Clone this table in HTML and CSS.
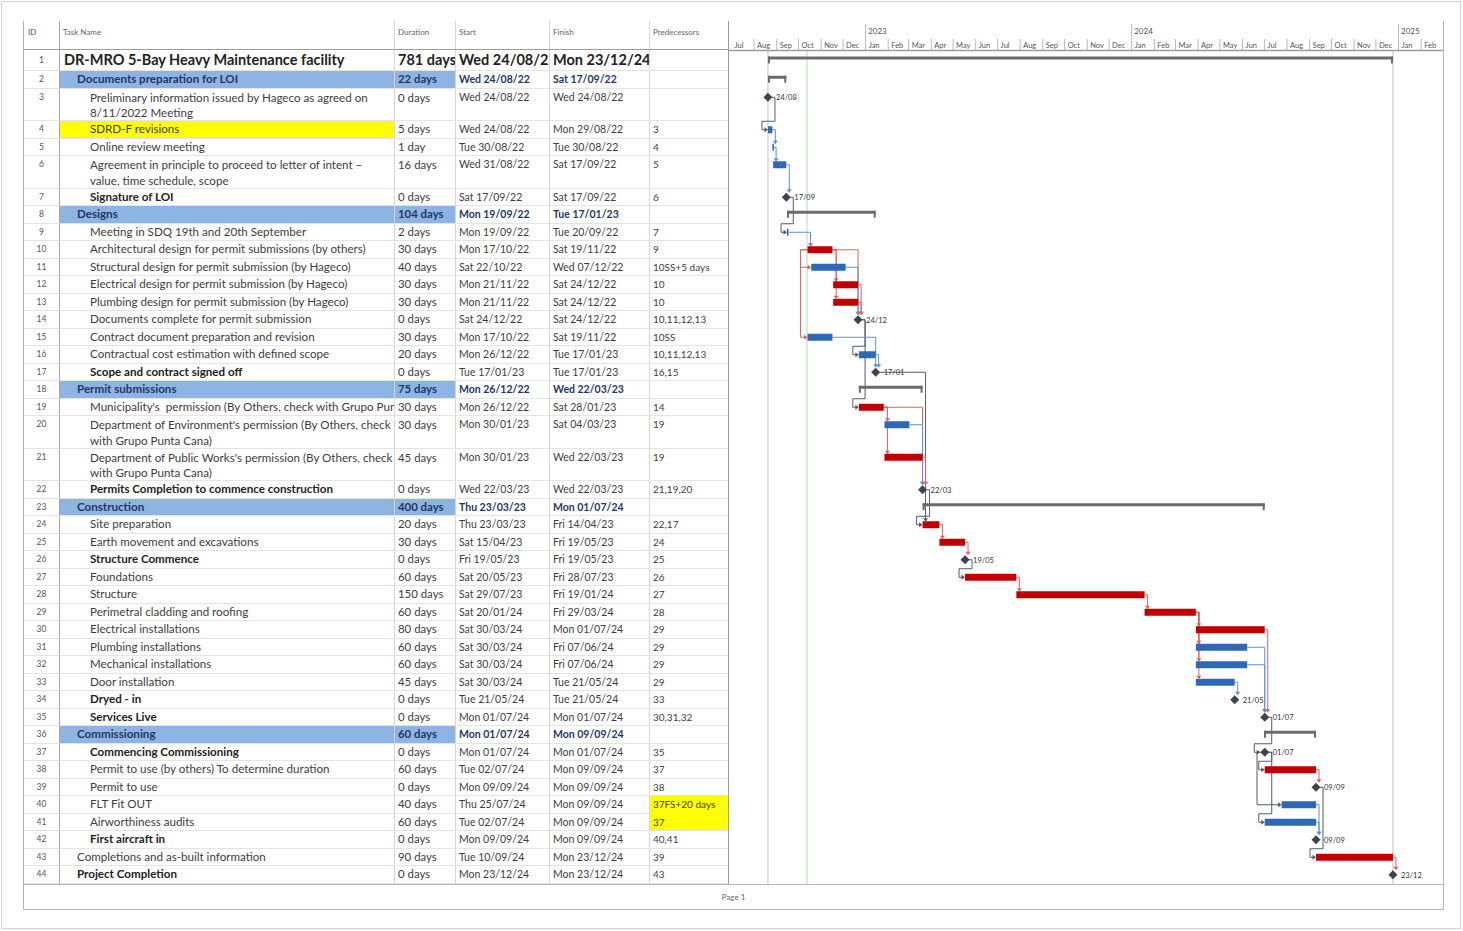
FILE: index.html
```html
<!DOCTYPE html>
<html lang="en">
<head>
<meta charset="utf-8">
<title>DR-MRO 5-Bay Heavy Maintenance facility – Gantt</title>
<link rel="stylesheet" href="styles.css">
</head>
<body>
<div class="sheet">
  <div class="page">
    <div class="main">
      <div class="table">
        <div class="row head"><div class="c id">ID</div><div class="c">Task Name</div><div class="c">Duration</div><div class="c">Start</div><div class="c">Finish</div><div class="c">Predecessors</div></div>
        <div class="row r-top"><div class="c id">1</div><div class="c name l0">DR-MRO 5-Bay Heavy Maintenance facility</div><div class="c dur">781 days</div><div class="c">Wed 24/08/22</div><div class="c">Mon 23/12/24</div><div class="c"></div></div>
        <div class="row sum"><div class="c id">2</div><div class="c name l1">Documents preparation for LOI</div><div class="c dur">22 days</div><div class="c">Wed 24/08/22</div><div class="c">Sat 17/09/22</div><div class="c"></div></div>
        <div class="row dbl"><div class="c id">3</div><div class="c name l2">Preliminary information issued by Hageco as agreed on<br>8/11/2022 Meeting</div><div class="c dur">0 days</div><div class="c">Wed 24/08/22</div><div class="c">Wed 24/08/22</div><div class="c"></div></div>
        <div class="row"><div class="c id">4</div><div class="c name l2 yellow">SDRD-F revisions</div><div class="c dur">5 days</div><div class="c">Wed 24/08/22</div><div class="c">Mon 29/08/22</div><div class="c">3</div></div>
        <div class="row"><div class="c id">5</div><div class="c name l2">Online review meeting</div><div class="c dur">1 day</div><div class="c">Tue 30/08/22</div><div class="c">Tue 30/08/22</div><div class="c">4</div></div>
        <div class="row dbl"><div class="c id">6</div><div class="c name l2">Agreement in principle to proceed to letter of intent –<br>value, time schedule, scope</div><div class="c dur">16 days</div><div class="c">Wed 31/08/22</div><div class="c">Sat 17/09/22</div><div class="c">5</div></div>
        <div class="row"><div class="c id">7</div><div class="c name l2 b">Signature of LOI</div><div class="c dur">0 days</div><div class="c">Sat 17/09/22</div><div class="c">Sat 17/09/22</div><div class="c">6</div></div>
        <div class="row sum"><div class="c id">8</div><div class="c name l1">Designs</div><div class="c dur">104 days</div><div class="c">Mon 19/09/22</div><div class="c">Tue 17/01/23</div><div class="c"></div></div>
        <div class="row"><div class="c id">9</div><div class="c name l2">Meeting in SDQ 19th and 20th September</div><div class="c dur">2 days</div><div class="c">Mon 19/09/22</div><div class="c">Tue 20/09/22</div><div class="c">7</div></div>
        <div class="row"><div class="c id">10</div><div class="c name l2">Architectural design for permit submissions (by others)</div><div class="c dur">30 days</div><div class="c">Mon 17/10/22</div><div class="c">Sat 19/11/22</div><div class="c">9</div></div>
        <div class="row"><div class="c id">11</div><div class="c name l2">Structural design for permit submission (by Hageco)</div><div class="c dur">40 days</div><div class="c">Sat 22/10/22</div><div class="c">Wed 07/12/22</div><div class="c">10SS+5 days</div></div>
        <div class="row"><div class="c id">12</div><div class="c name l2">Electrical design for permit submission (by Hageco)</div><div class="c dur">30 days</div><div class="c">Mon 21/11/22</div><div class="c">Sat 24/12/22</div><div class="c">10</div></div>
        <div class="row"><div class="c id">13</div><div class="c name l2">Plumbing design for permit submission (by Hageco)</div><div class="c dur">30 days</div><div class="c">Mon 21/11/22</div><div class="c">Sat 24/12/22</div><div class="c">10</div></div>
        <div class="row"><div class="c id">14</div><div class="c name l2">Documents complete for permit submission</div><div class="c dur">0 days</div><div class="c">Sat 24/12/22</div><div class="c">Sat 24/12/22</div><div class="c">10,11,12,13</div></div>
        <div class="row"><div class="c id">15</div><div class="c name l2">Contract document preparation and revision</div><div class="c dur">30 days</div><div class="c">Mon 17/10/22</div><div class="c">Sat 19/11/22</div><div class="c">10SS</div></div>
        <div class="row"><div class="c id">16</div><div class="c name l2">Contractual cost estimation with defined scope</div><div class="c dur">20 days</div><div class="c">Mon 26/12/22</div><div class="c">Tue 17/01/23</div><div class="c">10,11,12,13</div></div>
        <div class="row"><div class="c id">17</div><div class="c name l2 b">Scope and contract signed off</div><div class="c dur">0 days</div><div class="c">Tue 17/01/23</div><div class="c">Tue 17/01/23</div><div class="c">16,15</div></div>
        <div class="row sum"><div class="c id">18</div><div class="c name l1">Permit submissions</div><div class="c dur">75 days</div><div class="c">Mon 26/12/22</div><div class="c">Wed 22/03/23</div><div class="c"></div></div>
        <div class="row"><div class="c id">19</div><div class="c name l2">Municipality's&nbsp; permission (By Others, check with Grupo Punta Cana)</div><div class="c dur">30 days</div><div class="c">Mon 26/12/22</div><div class="c">Sat 28/01/23</div><div class="c">14</div></div>
        <div class="row dbl"><div class="c id">20</div><div class="c name l2">Department of Environment's permission (By Others, check<br>with Grupo Punta Cana)</div><div class="c dur">30 days</div><div class="c">Mon 30/01/23</div><div class="c">Sat 04/03/23</div><div class="c">19</div></div>
        <div class="row dbl"><div class="c id">21</div><div class="c name l2">Department of Public Works's permission (By Others, check<br>with Grupo Punta Cana)</div><div class="c dur">45 days</div><div class="c">Mon 30/01/23</div><div class="c">Wed 22/03/23</div><div class="c">19</div></div>
        <div class="row"><div class="c id">22</div><div class="c name l2 b">Permits Completion to commence construction</div><div class="c dur">0 days</div><div class="c">Wed 22/03/23</div><div class="c">Wed 22/03/23</div><div class="c">21,19,20</div></div>
        <div class="row sum"><div class="c id">23</div><div class="c name l1">Construction</div><div class="c dur">400 days</div><div class="c">Thu 23/03/23</div><div class="c">Mon 01/07/24</div><div class="c"></div></div>
        <div class="row"><div class="c id">24</div><div class="c name l2">Site preparation</div><div class="c dur">20 days</div><div class="c">Thu 23/03/23</div><div class="c">Fri 14/04/23</div><div class="c">22,17</div></div>
        <div class="row"><div class="c id">25</div><div class="c name l2">Earth movement and excavations</div><div class="c dur">30 days</div><div class="c">Sat 15/04/23</div><div class="c">Fri 19/05/23</div><div class="c">24</div></div>
        <div class="row"><div class="c id">26</div><div class="c name l2 b">Structure Commence</div><div class="c dur">0 days</div><div class="c">Fri 19/05/23</div><div class="c">Fri 19/05/23</div><div class="c">25</div></div>
        <div class="row"><div class="c id">27</div><div class="c name l2">Foundations</div><div class="c dur">60 days</div><div class="c">Sat 20/05/23</div><div class="c">Fri 28/07/23</div><div class="c">26</div></div>
        <div class="row"><div class="c id">28</div><div class="c name l2">Structure</div><div class="c dur">150 days</div><div class="c">Sat 29/07/23</div><div class="c">Fri 19/01/24</div><div class="c">27</div></div>
        <div class="row"><div class="c id">29</div><div class="c name l2">Perimetral cladding and roofing</div><div class="c dur">60 days</div><div class="c">Sat 20/01/24</div><div class="c">Fri 29/03/24</div><div class="c">28</div></div>
        <div class="row"><div class="c id">30</div><div class="c name l2">Electrical installations</div><div class="c dur">80 days</div><div class="c">Sat 30/03/24</div><div class="c">Mon 01/07/24</div><div class="c">29</div></div>
        <div class="row"><div class="c id">31</div><div class="c name l2">Plumbing installations</div><div class="c dur">60 days</div><div class="c">Sat 30/03/24</div><div class="c">Fri 07/06/24</div><div class="c">29</div></div>
        <div class="row"><div class="c id">32</div><div class="c name l2">Mechanical installations</div><div class="c dur">60 days</div><div class="c">Sat 30/03/24</div><div class="c">Fri 07/06/24</div><div class="c">29</div></div>
        <div class="row"><div class="c id">33</div><div class="c name l2">Door installation</div><div class="c dur">45 days</div><div class="c">Sat 30/03/24</div><div class="c">Tue 21/05/24</div><div class="c">29</div></div>
        <div class="row"><div class="c id">34</div><div class="c name l2 b">Dryed - in</div><div class="c dur">0 days</div><div class="c">Tue 21/05/24</div><div class="c">Tue 21/05/24</div><div class="c">33</div></div>
        <div class="row"><div class="c id">35</div><div class="c name l2 b">Services Live</div><div class="c dur">0 days</div><div class="c">Mon 01/07/24</div><div class="c">Mon 01/07/24</div><div class="c">30,31,32</div></div>
        <div class="row sum"><div class="c id">36</div><div class="c name l1">Commissioning</div><div class="c dur">60 days</div><div class="c">Mon 01/07/24</div><div class="c">Mon 09/09/24</div><div class="c"></div></div>
        <div class="row"><div class="c id">37</div><div class="c name l2 b">Commencing Commissioning</div><div class="c dur">0 days</div><div class="c">Mon 01/07/24</div><div class="c">Mon 01/07/24</div><div class="c">35</div></div>
        <div class="row"><div class="c id">38</div><div class="c name l2">Permit to use (by others) To determine duration</div><div class="c dur">60 days</div><div class="c">Tue 02/07/24</div><div class="c">Mon 09/09/24</div><div class="c">37</div></div>
        <div class="row"><div class="c id">39</div><div class="c name l2">Permit to use</div><div class="c dur">0 days</div><div class="c">Mon 09/09/24</div><div class="c">Mon 09/09/24</div><div class="c">38</div></div>
        <div class="row"><div class="c id">40</div><div class="c name l2">FLT Fit OUT</div><div class="c dur">40 days</div><div class="c">Thu 25/07/24</div><div class="c">Mon 09/09/24</div><div class="c yellow">37FS+20 days</div></div>
        <div class="row"><div class="c id">41</div><div class="c name l2">Airworthiness audits</div><div class="c dur">60 days</div><div class="c">Tue 02/07/24</div><div class="c">Mon 09/09/24</div><div class="c yellow">37</div></div>
        <div class="row"><div class="c id">42</div><div class="c name l2 b">First aircraft in</div><div class="c dur">0 days</div><div class="c">Mon 09/09/24</div><div class="c">Mon 09/09/24</div><div class="c">40,41</div></div>
        <div class="row"><div class="c id">43</div><div class="c name l1">Completions and as-built information</div><div class="c dur">90 days</div><div class="c">Tue 10/09/24</div><div class="c">Mon 23/12/24</div><div class="c">39</div></div>
        <div class="row"><div class="c id">44</div><div class="c name l1 b">Project Completion</div><div class="c dur">0 days</div><div class="c">Mon 23/12/24</div><div class="c">Mon 23/12/24</div><div class="c">43</div></div>
      </div>
      <div class="chart">
        <svg id="gantt" class="gantt" width="714" height="863" viewBox="0 0 714 863" xmlns="http://www.w3.org/2000/svg"></svg>
      </div>
    </div>
    <div class="footer">Page 1</div>
  </div>
</div>
<script src="chart.js"></script>
</body>
</html>
```

FILE: styles.css
```css
* { box-sizing: border-box; }
html, body { margin: 0; padding: 0; background: #fff; }
body {
  font-family: Lato, "Open Sans", "Liberation Sans", sans-serif;
  color: #3d3d3d;
}
.sheet {
  margin: 1px;
  width: 1460px;
  height: 928px;
  border: 1px solid #d2d2d2;
  padding: 19px 0 0 21px;
}
.page {
  width: 1421px;
  border: 1px solid #b4b4b4;
  border-top: none;
}
.main { display: flex; height: 863px; }
.table { width: 704px; flex: none; }
.chart { width: 715px; flex: none; border-left: 1px solid #9c9c9c; }
.gantt { display: block; }

.row {
  display: grid;
  grid-template-columns: 36px 335px 61px 94px 100px 78px;
  height: 17.5px;
  font-size: 10.5px;
}
.c {
  border-right: 1px solid #d6d6d6;
  border-bottom: 1px solid #e4e4e4;
  padding: 0 3px;
  line-height: 16.5px;
  white-space: nowrap;
  overflow: hidden;
}
.c:last-child { border-right: none; font-size: 10px; }
.name { font-size: 11.6px; }
.dur { font-size: 11.4px; }
.id { text-align: center; border-right-color: #a6a6a6; font-size: 8.5px; color: #555; }

.head { height: 29px; border-bottom: 1px solid #9d9d9d; color: #666; }
.head .c { border-bottom: none; padding-top: 6px; line-height: 10px; font-size: 8px; }
.head .id { text-align: left; padding-left: 4px; }

.r-top { height: 21px; font-weight: 700; color: #222; }
.r-top .c { line-height: 20px; font-size: 14.5px; }
.r-top .id { font-size: 8.5px; font-weight: 400; color: #555; }

.dbl { height: 32.5px; }
.dbl .c { line-height: 15.5px; padding-top: 1px; }

.l0 { padding-left: 4px; }
.l1 { padding-left: 17px; }
.l2 { padding-left: 30px; }

.sum .c { font-weight: 700; color: #1f3763; }
.sum .name, .sum .dur { background: #8eb4e3; }
.sum .id { font-weight: 400; color: #555; }
.b { font-weight: 700; color: #222; }
.yellow { background: #ffff00; }

.footer {
  height: 25px;
  border-top: 1px solid #b4b4b4;
  text-align: center;
  font-size: 8px;
  color: #666;
  line-height: 24px;
}

/* gantt drawing */
.tick { stroke: #b9b9b9; stroke-width: 1; }
.mlab { font: 7.5px Lato, sans-serif; fill: #555; }
.ylab { font: 8px Lato, sans-serif; fill: #555; }
.hline { stroke: #9d9d9d; stroke-width: 1.5; }
.vproj { stroke: #c2c2c2; stroke-width: 1; }
.vnow { stroke: #b5dbb5; stroke-width: 1; }
.mslab { font: 7.5px Lato, sans-serif; fill: #333; }
.link { fill: none; stroke-width: 1; }
```

FILE: chart.js
```js
(function () {
  var NS = 'http://www.w3.org/2000/svg';
  var svg = document.getElementById('gantt');
  var LEFT = 729, TOP = 21, W = 714, H = 884 - TOP;
  var BASE = Date.UTC(2022, 6, 1);
  function dnum(s) { var p = s.split('/'); return (Date.UTC(2000 + (+p[2]), (+p[1]) - 1, +p[0]) - BASE) / 864e5; }
  var K = 0.7327, X0 = 728.4 - LEFT;
  function xs(s) { return X0 + dnum(s) * K; }
  function xe(s) { return X0 + (dnum(s) + 1) * K; }
  var HX0 = 731.5 - LEFT, HK = 0.729;
  function hx(d) { return HX0 + d * HK; }
  var RED = '#c00000', BLUE = '#2f69b5', LR = '#e06060', LB = '#5d8fd8', LG = '#555b63';

  function add(tag, attrs, text) {
    var e = document.createElementNS(NS, tag);
    for (var k in attrs) e.setAttribute(k, attrs[k]);
    if (text != null) e.textContent = text;
    svg.appendChild(e);
    return e;
  }

  /* row geometry */
  var dbl = { 3: 1, 6: 1, 20: 1, 21: 1 };
  var mid = {}, y = 50 - TOP;
  for (var i = 1; i <= 44; i++) {
    var h = i === 1 ? 21 : (dbl[i] ? 32.5 : 17.5);
    mid[i] = dbl[i] ? y + 8.75 : y + h / 2;
    y += h;
  }

  /* timescale */
  var months = ['Jul', 'Aug', 'Sep', 'Oct', 'Nov', 'Dec', 'Jan', 'Feb', 'Mar', 'Apr', 'May', 'Jun'];
  for (var m = 0; m < 32; m++) {
    var yr = 2022 + Math.floor((m + 6) / 12), mo = (m + 6) % 12;
    var d0 = (Date.UTC(yr, mo, 1) - BASE) / 864e5;
    var x = hx(d0);
    if (m > 0) add('line', { x1: x, x2: x, y1: mo === 0 ? 3 : 18, y2: 29, 'class': 'tick' });
    add('text', { x: x + 3, y: 26.5, 'class': 'mlab' }, months[m % 12]);
    if (mo === 0) add('text', { x: x + 2.5, y: 12.5, 'class': 'ylab' }, String(yr));
  }
  add('line', { x1: 0, x2: W, y1: 29.5, y2: 29.5, 'class': 'hline' });

  /* vertical guide lines */
  var ps = xs('24/08/22'), pe = xe('23/12/24'), now = 807 - LEFT;
  add('line', { x1: ps, x2: ps, y1: 30, y2: H, 'class': 'vproj' });
  add('line', { x1: pe, x2: pe, y1: 30, y2: H, 'class': 'vproj' });
  add('line', { x1: now, x2: now, y1: 30, y2: H, 'class': 'vnow' });

  /* tasks */
  var T = {};
  function bar(id, s, f, c) { T[id] = { t: 'bar', x1: xs(s), x2: xe(f), y: mid[id], c: c }; }
  function ms(id, x, label) { T[id] = { t: 'ms', x: x, y: mid[id], label: label }; }
  function sum(id, s, f) { T[id] = { t: 'sum', x1: xs(s), x2: xe(f), y: mid[id] }; }

  sum(1, '24/08/22', '23/12/24');
  sum(2, '24/08/22', '17/09/22');
  ms(3, xs('24/08/22'), '24/08');
  bar(4, '24/08/22', '29/08/22', 'b');
  bar(5, '30/08/22', '30/08/22', 'b');
  bar(6, '31/08/22', '17/09/22', 'b');
  ms(7, xe('17/09/22'), '17/09');
  sum(8, '19/09/22', '17/01/23');
  bar(9, '19/09/22', '20/09/22', 'b');
  bar(10, '17/10/22', '19/11/22', 'r');
  bar(11, '22/10/22', '07/12/22', 'b');
  bar(12, '21/11/22', '24/12/22', 'r');
  bar(13, '21/11/22', '24/12/22', 'r');
  ms(14, xe('24/12/22'), '24/12');
  bar(15, '17/10/22', '19/11/22', 'b');
  bar(16, '26/12/22', '17/01/23', 'b');
  ms(17, xe('17/01/23'), '17/01');
  sum(18, '26/12/22', '22/03/23');
  bar(19, '26/12/22', '28/01/23', 'r');
  bar(20, '30/01/23', '04/03/23', 'b');
  bar(21, '30/01/23', '22/03/23', 'r');
  ms(22, xe('22/03/23'), '22/03');
  sum(23, '23/03/23', '01/07/24');
  bar(24, '23/03/23', '14/04/23', 'r');
  bar(25, '15/04/23', '19/05/23', 'r');
  ms(26, xe('19/05/23'), '19/05');
  bar(27, '20/05/23', '28/07/23', 'r');
  bar(28, '29/07/23', '19/01/24', 'r');
  bar(29, '20/01/24', '29/03/24', 'r');
  bar(30, '30/03/24', '01/07/24', 'r');
  bar(31, '30/03/24', '07/06/24', 'b');
  bar(32, '30/03/24', '07/06/24', 'b');
  bar(33, '30/03/24', '21/05/24', 'b');
  ms(34, xe('21/05/24'), '21/05');
  ms(35, xe('01/07/24'), '01/07');
  sum(36, '01/07/24', '09/09/24');
  ms(37, xe('01/07/24'), '01/07');
  bar(38, '02/07/24', '09/09/24', 'r');
  ms(39, xe('09/09/24'), '09/09');
  bar(40, '25/07/24', '09/09/24', 'b');
  bar(41, '02/07/24', '09/09/24', 'b');
  ms(42, xe('09/09/24'), '09/09');
  bar(43, '10/09/24', '23/12/24', 'r');
  ms(44, xe('23/12/24'), '23/12');

  /* links */
  function colOf(p) { return p.t === 'ms' ? LG : (p.c === 'r' ? LR : LB); }
  function startOf(s) { return s.t === 'ms' ? s.x : s.x1; }
  function path(d, col) { add('path', { d: d, 'class': 'link', stroke: col }); }
  function arrowDown(x, ty, col) { add('polygon', { points: (x - 2.5) + ',' + (ty - 3.5) + ' ' + (x + 2.5) + ',' + (ty - 3.5) + ' ' + x + ',' + ty, fill: col }); }
  function arrowRight(tx, y, col) { add('polygon', { points: (tx - 3.5) + ',' + (y - 2.5) + ' ' + (tx - 3.5) + ',' + (y + 2.5) + ' ' + tx + ',' + y, fill: col }); }

  function fs(a, b) {
    var p = T[a], s = T[b], col = colOf(p);
    var px = p.t === 'ms' ? p.x + 4 : p.x2, py = p.y;
    var sx = startOf(s);
    if (sx + 1 >= px) {
      var vx = Math.max(px + 3, sx + (s.t === 'ms' ? 0 : 3));
      var ty = s.y - (s.t === 'ms' ? 4.5 : 3);
      path('M' + px + ' ' + py + 'H' + vx + 'V' + (ty - 3), col);
      arrowDown(vx, ty, col);
    } else {
      var tx = s.t === 'ms' ? s.x - 4.5 : sx;
      path('M' + px + ' ' + py + 'H' + (px + 3) + 'V' + (s.y - 8.5) + 'H' + (tx - 6) + 'V' + s.y + 'H' + (tx - 3), col);
      arrowRight(tx, s.y, col);
    }
  }
  function ss(a, b) {
    var p = T[a], s = T[b], col = colOf(p);
    path('M' + p.x1 + ' ' + p.y + 'H' + (p.x1 - 7) + 'V' + s.y + 'H' + (s.x1 - 3), col);
    arrowRight(s.x1, s.y, col);
  }

  [[3, 4], [4, 5], [5, 6], [6, 7], [7, 9], [9, 10], [10, 12], [10, 13], [10, 14], [11, 14], [12, 14], [13, 14],
   [14, 16], [14, 19], [15, 17], [16, 17], [17, 24], [19, 20], [19, 21], [19, 22], [20, 22], [21, 22], [22, 24],
   [24, 25], [25, 26], [26, 27], [27, 28], [28, 29], [29, 30], [29, 31], [29, 32], [29, 33], [30, 35], [31, 35],
   [32, 35], [33, 34], [35, 37], [37, 38], [37, 41], [38, 39], [39, 43], [40, 42], [41, 42], [43, 44]
  ].forEach(function (l) { fs(l[0], l[1]); });
  ss(10, 11);
  ss(10, 15);
  (function () {
    var p = T[37], s = T[40], lx = 1257 - LEFT;
    path('M' + (p.x - 4) + ' ' + p.y + 'H' + lx + 'V' + s.y + 'H' + (s.x1 - 3), LG);
    arrowRight(s.x1, s.y, LG);
  })();

  /* shapes */
  Object.keys(T).forEach(function (k) {
    var t = T[k];
    if (t.t === 'sum') {
      add('rect', { x: t.x1, y: t.y - 4, width: t.x2 - t.x1, height: 3, fill: '#6b6b6b' });
      add('rect', { x: t.x1, y: t.y - 4, width: 2, height: 7, fill: '#6b6b6b' });
      add('rect', { x: t.x2 - 2, y: t.y - 4, width: 2, height: 7, fill: '#6b6b6b' });
    } else if (t.t === 'bar') {
      add('rect', { x: t.x1, y: t.y - 3.5, width: Math.max(1.5, t.x2 - t.x1), height: 7, fill: t.c === 'r' ? RED : BLUE });
    }
  });
  Object.keys(T).forEach(function (k) {
    var t = T[k];
    if (t.t === 'ms') {
      add('polygon', { points: t.x + ',' + (t.y - 4.5) + ' ' + (t.x + 4.5) + ',' + t.y + ' ' + t.x + ',' + (t.y + 4.5) + ' ' + (t.x - 4.5) + ',' + t.y, fill: '#3c4450' });
      add('text', { x: t.x + 8, y: t.y + 3, 'class': 'mslab' }, t.label);
    }
  });
})();
```
